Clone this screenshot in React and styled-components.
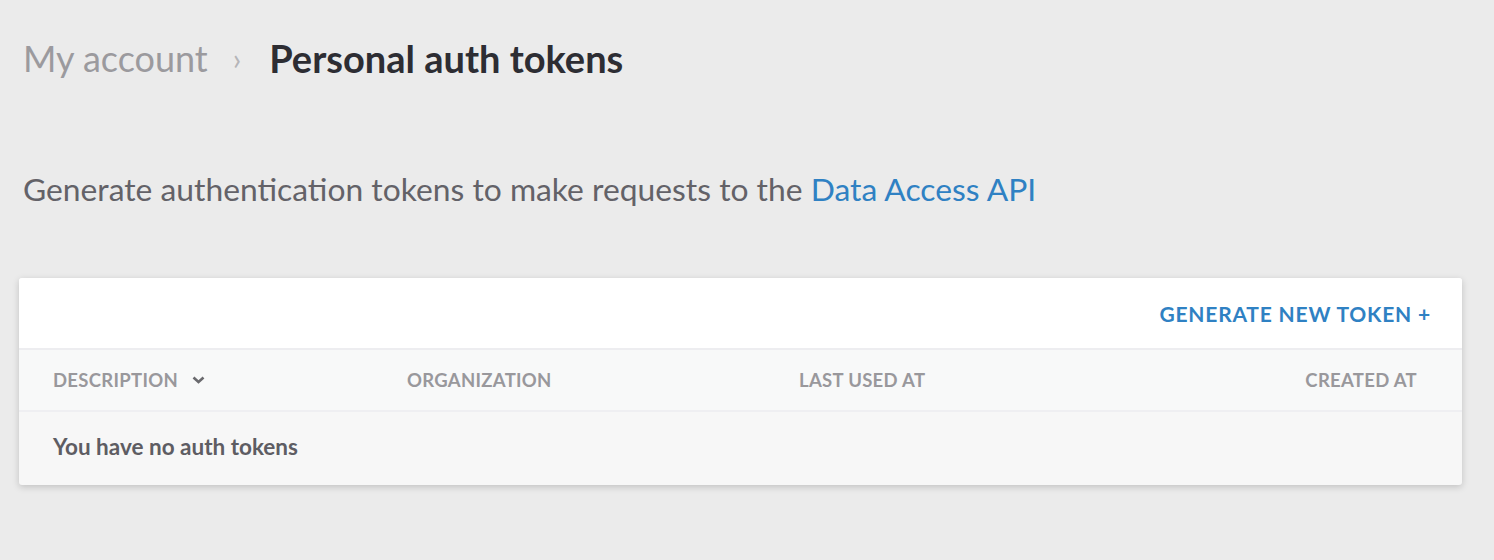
import React from 'react'
import styled, { createGlobalStyle } from 'styled-components'

const GlobalStyle = createGlobalStyle`
  html, body {
    margin: 0;
    padding: 0;
    background: #ebebeb;
    font-family: Lato, "Open Sans", "Liberation Sans", sans-serif;
  }
`

const Page = styled.div`
  padding: 32px 32px 40px 23px;
  width: 1494px;
  box-sizing: border-box;
`

const Breadcrumb = styled.h1`
  display: flex;
  align-items: center;
  margin: 0;
  height: 52px;
  line-height: 52px;
  font-weight: 400;
`

const Crumb = styled.span`
  color: ${(p) => (p.$current ? '#2d2d33' : '#9b9a9e')};
  font-weight: ${(p) => (p.$current ? 700 : 400)};
  font-size: ${(p) => (p.$current ? '38px' : '36px')};
`

const Separator = styled.span`
  color: #b5b5b8;
  font-size: 30px;
  margin: 0 28px 0 25px;
`

const Intro = styled.p`
  margin: 85px 0 0;
  font-size: 31.8px;
  line-height: 40px;
  color: #636268;
`

const Link = styled.a`
  color: #2f81c3;
  text-decoration: none;
`

const Card = styled.section`
  margin-top: 69px;
  margin-left: -4px;
  width: 1443px;
  background: #f7f7f7;
  border-radius: 3px;
  box-shadow: 0 2px 7px rgba(0, 0, 0, 0.18);
  overflow: hidden;
`

const Toolbar = styled.div`
  display: flex;
  justify-content: flex-end;
  align-items: center;
  height: 70px;
  padding: 0 31px;
  background: #fff;
  border-bottom: 2px solid #ededf0;
`

const GenerateButton = styled.button`
  border: 0;
  background: none;
  padding: 0;
  font-family: inherit;
  font-size: 21px;
  font-weight: 700;
  letter-spacing: 0.8px;
  color: #2f81c3;
  cursor: pointer;
`

const HeaderRow = styled.div`
  display: grid;
  grid-template-columns: 354px 392px 1fr auto;
  align-items: center;
  height: 60px;
  padding: 0 45px 0 34px;
  background: #f8f9f9;
  border-bottom: 2px solid #efeff2;
`

const HeaderCell = styled.div`
  display: flex;
  align-items: center;
  gap: 14px;
  font-size: 18.5px;
  font-weight: 700;
  letter-spacing: 0.3px;
  color: #99989c;
  justify-content: ${(p) => (p.$right ? 'flex-end' : 'flex-start')};
`

const EmptyRow = styled.div`
  display: flex;
  align-items: center;
  height: 73px;
  padding: 0 34px 4px;
  box-sizing: border-box;
  font-size: 22.5px;
  font-weight: 700;
  color: #5e5d63;
`

const Chevron = () => (
  <svg width="13" height="8" viewBox="0 0 13 8">
    <path d="M1.5 1.5 L6.5 6 L11.5 1.5" fill="none" stroke="#6a6a6e" strokeWidth="2.6" />
  </svg>
)

export default function App() {
  return (
    <>
      <GlobalStyle />
      <Page>
        <Breadcrumb>
          <Crumb>My account</Crumb>
          <Separator>›</Separator>
          <Crumb $current>Personal auth tokens</Crumb>
        </Breadcrumb>
        <Intro>
          Generate authentication tokens to make requests to the{' '}
          <Link href="#">Data Access API</Link>
        </Intro>
        <Card>
          <Toolbar>
            <GenerateButton>GENERATE NEW TOKEN +</GenerateButton>
          </Toolbar>
          <HeaderRow>
            <HeaderCell>
              DESCRIPTION <Chevron />
            </HeaderCell>
            <HeaderCell>ORGANIZATION</HeaderCell>
            <HeaderCell>LAST USED AT</HeaderCell>
            <HeaderCell $right>CREATED AT</HeaderCell>
          </HeaderRow>
          <EmptyRow>You have no auth tokens</EmptyRow>
        </Card>
      </Page>
    </>
  )
}
